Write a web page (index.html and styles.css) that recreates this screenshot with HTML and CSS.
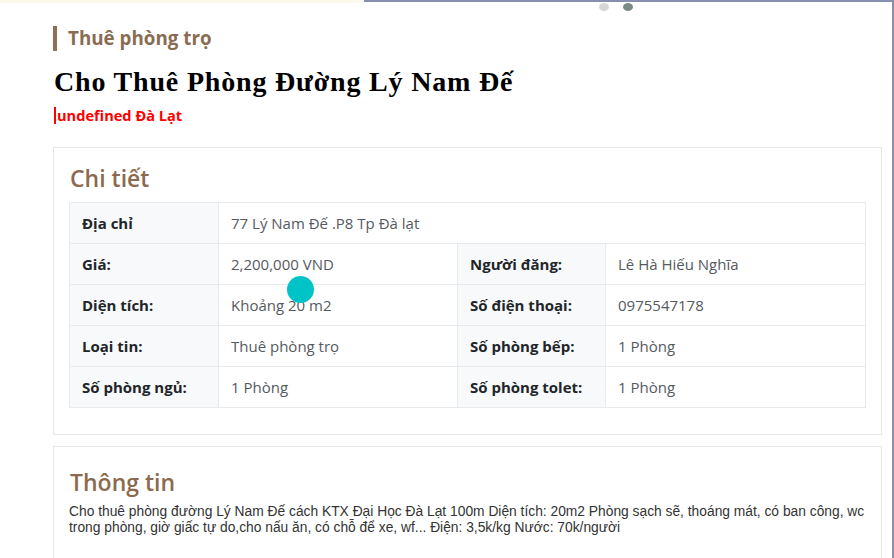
FILE: index.html
```html
<!DOCTYPE html>
<html lang="vi">
<head>
<meta charset="utf-8">
<title>Cho Thuê Phòng Đường Lý Nam Đế</title>
<link rel="stylesheet" href="styles.css">
</head>
<body>
<div class="topbar"><div class="topbar-left"></div><div class="topbar-right"></div></div>
<div class="dots"><span class="dot"></span><span class="dot active"></span></div>
<main class="page">
  <div class="category">Thuê phòng trọ</div>
  <h1 class="title">Cho Thuê Phòng Đường Lý Nam Đế</h1>
  <div class="location">undefined Đà Lạt</div>

  <section class="card">
    <h2 class="card-title">Chi tiết</h2>
    <table class="details">
      <colgroup>
        <col class="c1"><col class="c2"><col class="c3"><col class="c4">
      </colgroup>
      <tr><th>Địa chỉ</th><td colspan="3">77 Lý Nam Đế .P8 Tp Đà lạt</td></tr>
      <tr><th>Giá:</th><td>2,200,000 VND</td><th>Người đăng:</th><td>Lê Hà Hiếu Nghĩa</td></tr>
      <tr><th>Diện tích:</th><td>Khoảng 20 m2</td><th>Số điện thoại:</th><td>0975547178</td></tr>
      <tr><th>Loại tin:</th><td>Thuê phòng trọ</td><th>Số phòng bếp:</th><td>1 Phòng</td></tr>
      <tr><th>Số phòng ngủ:</th><td>1 Phòng</td><th>Số phòng tolet:</th><td>1 Phòng</td></tr>
    </table>
  </section>

  <section class="card card-info">
    <h2 class="card-title">Thông tin</h2>
    <p class="info-text">Cho thuê phòng đường Lý Nam Đế cách KTX Đại Học Đà Lạt 100m Diện tích: 20m2 Phòng sạch sẽ, thoáng mát, có ban công, wc trong phòng, giờ giấc tự do,cho nấu ăn, có chỗ để xe, wf... Điện: 3,5k/kg Nước: 70k/người</p>
  </section>
</main>
<div class="touch"></div>
<div class="edge"></div>
</body>
</html>
```

FILE: styles.css
```css
html, body {
  margin: 0;
  padding: 0;
  background: #ffffff;
  overflow: hidden;
  height: 558px;
}
body {
  font-family: "Open Sans", "Noto Sans", sans-serif;
  color: #212529;
}
.topbar {
  display: flex;
  height: 3px;
}
.topbar-left {
  width: 364px;
  background: #fdf8ee;
}
.topbar-right {
  flex: 1;
  background: #8790b0;
  height: 2px;
}
.dots {
  position: absolute;
  top: 3px;
  left: 599px;
  display: flex;
  gap: 14px;
}
.dot {
  width: 10px;
  height: 8px;
  border-radius: 50%;
  background: #d6d6d6;
}
.dot.active {
  background: #7a8a84;
}
.edge {
  position: absolute;
  top: 0;
  right: 0;
  width: 2px;
  height: 558px;
  background: #8790b0;
}
.page {
  padding: 23px 12px 0 53px;
}
.category {
  border-left: 4px solid #8f6f55;
  padding-left: 11px;
  font-weight: 700;
  font-size: 18.8px;
  line-height: 25px;
  color: #8a6c52;
}
.title {
  margin: 15px 0 0 1px;
  font-family: "Liberation Serif", "Times New Roman", serif;
  font-weight: 700;
  font-size: 28px;
  letter-spacing: 0.82px;
  line-height: 32px;
  color: #000;
}
.location {
  margin: 9px 0 0 1px;
  border-left: 2px solid #ff0000;
  padding-left: 1px;
  font-weight: 700;
  font-size: 14.6px;
  line-height: 17px;
  color: #ff0000;
}
.card {
  margin-top: 23px;
  border: 1px solid #e6e6e6;
  padding: 16px 15px 26px 15px;
}
.card-title {
  margin: 0 0 10px 1px;
  font-weight: 600;
  font-size: 23px;
  line-height: 28px;
  color: #8b6a4e;
}
.details {
  width: 100%;
  border-collapse: collapse;
  font-size: 15px;
}
.details col.c1 { width: 149px; }
.details col.c2 { width: 239px; }
.details col.c3 { width: 148px; }
.details th, .details td {
  border: 1px solid #e8ebee;
  height: 40px;
  padding: 0 10px 0 12px;
  text-align: left;
  vertical-align: middle;
}
.details th {
  background: #f8f9fa;
  font-weight: 700;
  color: #212529;
}
.details td {
  color: #555a5f;
  font-weight: 400;
}
.card-info {
  margin-top: 11px;
  padding-top: 21px;
  padding-bottom: 40px;
}
.card-info .card-title {
  margin-bottom: 8px;
}
.info-text {
  margin: 0;
  font-family: "Liberation Sans", Arial, sans-serif;
  font-size: 13.8px;
  line-height: 16px;
  color: #333;
}
.touch {
  position: absolute;
  left: 287px;
  top: 276px;
  width: 27px;
  height: 27px;
  border-radius: 50%;
  background: #00c3c8;
}
```
